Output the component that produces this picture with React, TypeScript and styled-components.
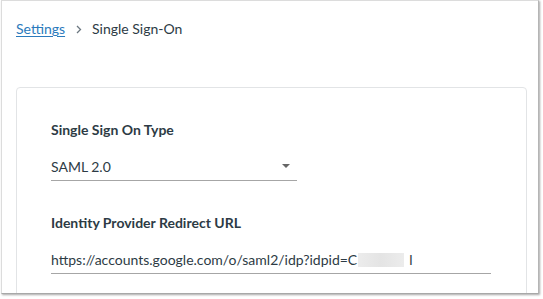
import React from "react";
import styled, { createGlobalStyle } from "styled-components";

const Global = createGlobalStyle`
  html, body { margin: 0; padding: 0; background: #ffffff; }
  body { width: 543px; height: 299px; overflow: hidden; font-family: Lato, "Noto Sans", sans-serif; }
`;

const Stage = styled.div`
  width: 543px;
  height: 299px;
  padding: 0 0 0 1px;
  box-sizing: border-box;
`;

const Frame = styled.div`
  width: 538px;
  height: 294px;
  box-sizing: border-box;
  border: 1px solid #dcdcdc;
  border-right-color: #b5b5b5;
  border-bottom-color: #a8a8a8;
  box-shadow: 1px 1px 2px rgba(0, 0, 0, 0.35);
  background: #ffffff;
  overflow: hidden;
  padding: 0 11px 0 14px;
  display: flex;
  flex-direction: column;
`;

const Breadcrumb = styled.nav`
  display: flex;
  align-items: center;
  height: 20px;
  margin-top: 18px;
  font-size: 14px;
  line-height: 20px;
  color: #2d3b45;
`;

const Crumb = styled.a`
  color: #2b7abc;
  text-decoration: underline;
  text-underline-offset: 2px;
  text-decoration-thickness: 1px;
`;

const Sep = styled.span`
  display: inline-flex;
  margin: 0 10px 0 11px;
  color: #6b7780;
`;

const Current = styled.span`
  color: #2d3b45;
`;

const Card = styled.section`
  margin-top: 48px;
  flex: 1 0 auto;
  border: 1px solid #e2e4e6;
  border-radius: 4px;
  padding: 32px 34px 40px 34px;
  display: flex;
  flex-direction: column;
  gap: 32px;
`;

const Field = styled.div`
  display: flex;
  flex-direction: column;
`;

const Label = styled.label`
  font-size: 14px;
  font-weight: 700;
  line-height: 20px;
  color: #2d3b45;
  margin-bottom: 10px;
`;

const Control = styled.div<{ $width: number }>`
  width: ${(p) => p.$width}px;
  position: relative;
  padding: 7px 0 3px 0;
  border-bottom: 1px solid #a6a6a6;
  font-size: 14px;
  line-height: 20px;
  color: #2d3b45;
  display: flex;
  align-items: center;
`;

const Arrow = styled.span`
  position: absolute;
  right: 7px;
  top: 14px;
  width: 0;
  height: 0;
  border-left: 4px solid transparent;
  border-right: 4px solid transparent;
  border-top: 4px solid #666666;
`;

const Redacted = styled.span`
  display: inline-block;
  width: 46px;
  height: 14px;
  margin: 0 5px 0 1px;
  background: linear-gradient(90deg, #ececec, #e4e4e4 50%, #ececec);
`;

export default function App() {
  return (
    <>
      <Global />
      <Stage>
        <Frame>
          <Breadcrumb>
            <Crumb href="#">Settings</Crumb>
            <Sep>
              <svg width="6" height="9" viewBox="0 0 6 9">
                <path d="M1 1 L4.5 4.5 L1 8" fill="none" stroke="currentColor" strokeWidth="1.3" />
              </svg>
            </Sep>
            <Current>Single Sign-On</Current>
          </Breadcrumb>
          <Card>
            <Field>
              <Label>Single Sign On Type</Label>
              <Control $width={246}>
                SAML 2.0
                <Arrow />
              </Control>
            </Field>
            <Field>
              <Label>Identity Provider Redirect URL</Label>
              <Control $width={440}>
                https://accounts.google.com/o/saml2/idp?idpid=C
                <Redacted />l
              </Control>
            </Field>
          </Card>
        </Frame>
      </Stage>
    </>
  );
}
